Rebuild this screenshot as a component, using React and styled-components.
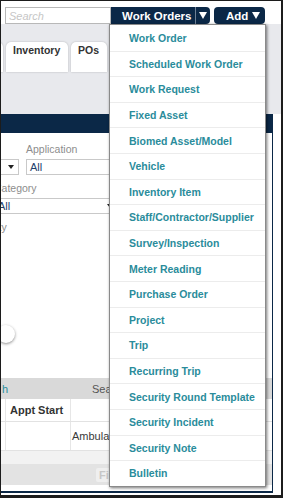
import React from "react";
import styled, { createGlobalStyle } from "styled-components";

const NAVY = "#0b2847";
const TEAL = "#2a8c9b";

const GlobalStyle = createGlobalStyle`
  html, body {
    margin: 0;
    padding: 0;
    background: #fff;
  }
  body {
    font-family: "Liberation Sans", Arial, sans-serif;
  }
`;

const Frame = styled.div`
  position: relative;
  width: 283px;
  height: 498px;
  box-sizing: border-box;
  border: solid #1c1c1c;
  border-width: 1px 2px 3px 1px;
  overflow: hidden;
  display: flex;
  flex-direction: column;
  background: #fff;
`;

const TopBar = styled.div`
  display: flex;
  align-items: flex-end;
  height: 23px;
  padding-left: 4px;
  flex-shrink: 0;
`;

const SearchBox = styled.input`
  box-sizing: border-box;
  width: 106px;
  height: 17px;
  margin: 0;
  border: 1px solid #b8b8b8;
  padding: 0 3px;
  font: italic 11px "Liberation Sans", Arial, sans-serif;
  outline: none;
  &::placeholder {
    color: #c6c6c6;
  }
`;

const NavButton = styled.div`
  display: flex;
  align-items: center;
  height: 17px;
  background: ${NAVY};
  color: #fff;
  font-weight: bold;
  font-size: 11.5px;
  white-space: nowrap;
  border-radius: ${(p) => (p.$split ? "0 4px 4px 0" : "4px")};
  margin-left: ${(p) => (p.$split ? "0" : "4px")};
`;

const ButtonLabel = styled.span`
  display: flex;
  align-items: center;
  gap: 4px;
  padding-left: ${(p) => p.$pad || 0}px;
  width: ${(p) => (p.$w ? `${p.$w}px` : "auto")};
  box-sizing: border-box;
  white-space: nowrap;
`;

const Caret = styled.span`
  display: inline-block;
  width: 0;
  height: 0;
  border-left: 4px solid transparent;
  border-right: 4px solid transparent;
  border-top: 7px solid #fff;
`;

const CaretCell = styled.span`
  display: flex;
  align-items: center;
  justify-content: center;
  width: 14px;
  height: 100%;
  border-left: 1px solid #6f8196;
`;

const TabArea = styled.div`
  height: 90px;
  flex-shrink: 0;
  background: #e8e9ed;
  box-sizing: border-box;
  padding-top: 18px;
  overflow: hidden;
`;

const TabRow = styled.div`
  display: flex;
  gap: 3px;
  margin-left: -40px;
`;

const Tab = styled.div`
  height: 30px;
  box-sizing: border-box;
  background: #fff;
  border-radius: 5px 5px 0 0;
  box-shadow: 0 0 2px rgba(0, 0, 0, 0.25);
  padding: 2px 0 0 7px;
  font-size: 10.5px;
  font-weight: bold;
  color: #333;
  white-space: nowrap;
  width: ${(p) => p.$w}px;
`;

const Panel = styled.div`
  flex: 1;
  display: flex;
  flex-direction: column;
  margin: 0 8px 2px 0;
  border-right: 1px solid ${NAVY};
  border-bottom: 2px solid ${NAVY};
  overflow: hidden;
`;

const PanelHeader = styled.div`
  height: 19px;
  flex-shrink: 0;
  background: ${NAVY};
`;

const FieldRow = styled.div`
  display: flex;
  gap: 7px;
  margin-left: ${(p) => p.$shift}px;
  margin-top: ${(p) => p.$top || 0}px;
`;

const Field = styled.div`
  display: flex;
  flex-direction: column;
  width: ${(p) => p.$w}px;
  flex-shrink: 0;
`;

const Label = styled.div`
  height: 13px;
  line-height: 13px;
  font-size: 10.5px;
  color: #8d8d8d;
  margin-bottom: 3px;
  white-space: nowrap;
`;

const Select = styled.div`
  display: flex;
  align-items: center;
  justify-content: space-between;
  height: 16px;
  box-sizing: border-box;
  border: 1px solid #c9c9c9;
  padding: 0 4px 0 3px;
  font-size: 11px;
  color: #1f3f6b;
`;

const SmallCaret = styled.span`
  width: 0;
  height: 0;
  border-left: 3px solid transparent;
  border-right: 3px solid transparent;
  border-top: 4px solid #222;
`;

const Knob = styled.div`
  width: 18px;
  height: 18px;
  border-radius: 50%;
  background: #fff;
  box-shadow: 0 1px 3px rgba(0, 0, 0, 0.45);
  margin: 88px 0 0 -4px;
`;

const Table = styled.div`
  margin-top: 35px;
  display: flex;
  flex-direction: column;
  font-size: 11px;
`;

const HeadRow = styled.div`
  display: grid;
  grid-template-columns: 91px 1fr;
  align-items: center;
  height: 21px;
  background: #d9d9d9;
  color: #555;
`;

const HeadCell = styled.div`
  padding-left: ${(p) => p.$pad || 0}px;
  color: ${(p) => (p.$link ? TEAL : "#555")};
  white-space: nowrap;
`;

const Row = styled.div`
  display: grid;
  grid-template-columns: 5px 65px 1fr;
  height: ${(p) => p.$h}px;
  border-bottom: 1px solid #e2e2e2;
  background: #fff;
`;

const Cell = styled.div`
  display: flex;
  align-items: center;
  padding-left: ${(p) => p.$pad || 0}px;
  border-right: ${(p) => (p.$last ? "none" : "1px solid #e6e6e6")};
  font-weight: ${(p) => (p.$bold ? "bold" : "normal")};
  color: ${(p) => (p.$bold ? "#333" : "#3a3a3a")};
  white-space: nowrap;
  overflow: hidden;
`;

const Band = styled.div`
  height: 13px;
  background: #f2f2f2;
`;

const Pager = styled.div`
  height: 21px;
  display: flex;
  align-items: center;
  background: #e3e3e3;
  padding-left: 95px;
`;

const PagerButton = styled.div`
  height: 14px;
  padding: 0 3px;
  line-height: 14px;
  background: #efefef;
  border-radius: 2px;
  color: #c7c7c7;
  font-size: 11px;
  font-weight: bold;
`;

const Menu = styled.ul`
  position: absolute;
  left: 108px;
  top: 23px;
  width: 157px;
  margin: 0;
  padding: 0;
  list-style: none;
  background: #fff;
  border: 1px solid #8a8a8a;
  box-shadow: 1px 1px 3px rgba(0, 0, 0, 0.55);
  box-sizing: border-box;
`;

const MenuItem = styled.li`
  height: 25.6px;
  display: flex;
  align-items: center;
  padding-left: 19px;
  box-sizing: border-box;
  border-top: ${(p) => (p.$first ? "none" : "1px solid #ececec")};
  color: ${TEAL};
  font-size: 10.5px;
  font-weight: bold;
  white-space: nowrap;
`;

const menuItems = [
  "Work Order",
  "Scheduled Work Order",
  "Work Request",
  "Fixed Asset",
  "Biomed Asset/Model",
  "Vehicle",
  "Inventory Item",
  "Staff/Contractor/Supplier",
  "Survey/Inspection",
  "Meter Reading",
  "Purchase Order",
  "Project",
  "Trip",
  "Recurring Trip",
  "Security Round Template",
  "Security Incident",
  "Security Note",
  "Bulletin",
];

export default function App() {
  return (
    <Frame>
      <GlobalStyle />
      <TopBar>
        <SearchBox placeholder="Search" />
        <NavButton $split>
          <ButtonLabel $pad={11} $w={84}>
            Work Orders
          </ButtonLabel>
          <CaretCell>
            <Caret />
          </CaretCell>
        </NavButton>
        <NavButton>
          <ButtonLabel $pad={12} $w={51}>
            Add <Caret />
          </ButtonLabel>
        </NavButton>
      </TopBar>

      <TabArea>
        <TabRow>
          <Tab $w={42} />
          <Tab $w={62}>Inventory</Tab>
          <Tab $w={36}>POs</Tab>
          <Tab $w={60}>Reports</Tab>
        </TabRow>
      </TabArea>

      <Panel>
        <PanelHeader />
        <FieldRow $shift={-59} $top={10}>
          <Field $w={77}>
            <Label>&nbsp;</Label>
            <Select>
              <span />
              <SmallCaret />
            </Select>
          </Field>
          <Field $w={150}>
            <Label>Application</Label>
            <Select>
              <span>All</span>
              <SmallCaret />
            </Select>
          </Field>
        </FieldRow>
        <FieldRow $shift={-7} $top={7}>
          <Field $w={124}>
            <Label>Category</Label>
            <Select>
              <span>All</span>
              <SmallCaret />
            </Select>
          </Field>
        </FieldRow>
        <FieldRow $shift={-27} $top={7}>
          <Field $w={120}>
            <Label>Priority</Label>
          </Field>
        </FieldRow>
        <Knob />
        <Table>
          <HeadRow>
            <HeadCell $pad={1} $link>
              h
            </HeadCell>
            <HeadCell>Search</HeadCell>
          </HeadRow>
          <Row $h={22}>
            <Cell />
            <Cell $pad={4} $bold>
              Appt Start
            </Cell>
            <Cell $last />
          </Row>
          <Row $h={28}>
            <Cell />
            <Cell />
            <Cell $last $pad={1}>
              Ambulatory
            </Cell>
          </Row>
          <Band />
          <Pager>
            <PagerButton>Filter</PagerButton>
          </Pager>
        </Table>
      </Panel>

      <Menu>
        {menuItems.map((item, i) => (
          <MenuItem key={item} $first={i === 0}>
            {item}
          </MenuItem>
        ))}
      </Menu>
    </Frame>
  );
}
